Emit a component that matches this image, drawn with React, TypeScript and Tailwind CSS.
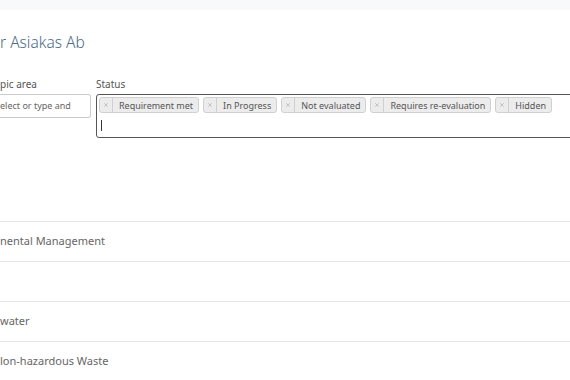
import { X } from 'lucide-react'

const STATUSES = ['Requirement met', 'In Progress', 'Not evaluated', 'Requires re-evaluation', 'Hidden']

const ROWS = ['', 'nental Management', '', 'water', 'lon-hazardous Waste']

function Chip({ label }: { label: string }) {
  return (
    <span className="flex items-stretch h-4 rounded-[3px] border border-[#d0d0d0] bg-[#ececec] text-[#555]">
      <span className="flex items-center justify-center w-[13px] border-r border-[#d0d0d0] text-[#aaa]">
        <X className="w-[6px] h-[6px]" strokeWidth={2.5} />
      </span>
      <span className="flex items-center pl-[6px] pr-[5px] text-[9px] leading-none">{label}</span>
    </span>
  )
}

export default function App() {
  return (
    <div className="w-[570px] h-[380px] overflow-hidden bg-white font-['Noto_Sans',sans-serif]">
      <div className="h-[10px] bg-[#f8f9fb]" />

      <h1 className="mt-[23px] text-[15.5px] leading-[18px] text-[#4d6b86] font-light">r Asiakas Ab</h1>

      <div className="mt-[27px] flex gap-[5px]">
        <div className="w-[91px] shrink-0">
          <div className="text-[10px] leading-[12px] text-[#555] mb-[4px]">pic area</div>
          <div className="h-[24px] flex items-center rounded-r-[3px] border border-l-0 border-[#ccc] text-[9px] text-[#666]">
            elect or type and
          </div>
        </div>
        <div className="flex-1 -mr-[10px]">
          <div className="text-[10px] leading-[12px] text-[#555] mb-[4px]">Status</div>
          <div className="h-[44px] rounded-[3px] border border-[#555] px-[2px] pt-[2px]">
            <div className="flex gap-[4px]">
              {STATUSES.map(s => <Chip key={s} label={s} />)}
            </div>
            <div className="ml-[2px] mt-[7px] w-px h-[11px] bg-[#333]" />
          </div>
        </div>
      </div>

      <div className="mt-[43px]">
        {ROWS.map((r, i) => (
          <div
            key={i}
            className={`h-[40px] flex items-center text-[11px] text-[#666] ${i > 0 ? 'border-t border-[#e4e4e4]' : ''}`}
          >
            {r}
          </div>
        ))}
      </div>
    </div>
  )
}
